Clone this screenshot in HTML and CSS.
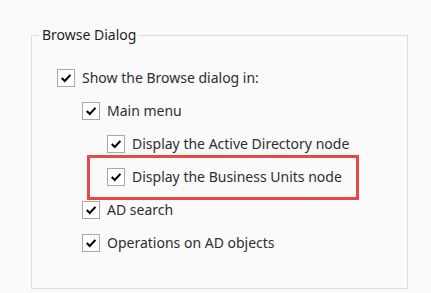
FILE: index.html
```html
<!DOCTYPE html>
<html lang="en">
<head>
    <meta charset="UTF-8">
    <title>Browse Dialog</title>
    <link rel="stylesheet" href="styles.css">
</head>
<body>
    <fieldset class="group">
        <legend>Browse Dialog</legend>

        <div class="options">
            <label class="row level-0">
                <span class="box"><svg viewBox="0 0 17 17"><path d="M4 8.5 L7.2 11.7 L13.2 5.2"/></svg></span>
                Show the Browse dialog in:
            </label>
            <label class="row level-1">
                <span class="box"><svg viewBox="0 0 17 17"><path d="M4 8.5 L7.2 11.7 L13.2 5.2"/></svg></span>
                Main menu
            </label>
            <label class="row level-2">
                <span class="box"><svg viewBox="0 0 17 17"><path d="M4 8.5 L7.2 11.7 L13.2 5.2"/></svg></span>
                Display the Active Directory node
            </label>
            <label class="row level-2 marked">
                <span class="box"><svg viewBox="0 0 17 17"><path d="M4 8.5 L7.2 11.7 L13.2 5.2"/></svg></span>
                Display the Business Units node
            </label>
            <label class="row level-1">
                <span class="box"><svg viewBox="0 0 17 17"><path d="M4 8.5 L7.2 11.7 L13.2 5.2"/></svg></span>
                AD search
            </label>
            <label class="row level-1">
                <span class="box"><svg viewBox="0 0 17 17"><path d="M4 8.5 L7.2 11.7 L13.2 5.2"/></svg></span>
                Operations on AD objects
            </label>
        </div>
    </fieldset>
</body>
</html>
```

FILE: styles.css
```css
body {
    margin: 0;
    padding: 25px 0 0 31px;
    background: #fafafa;
    font-family: "Noto Sans", "Open Sans", sans-serif;
    font-size: 14px;
    color: #2e2e2e;
}
.group {
    box-sizing: border-box;
    width: 377px;
    height: 264px;
    margin: 0;
    padding: 24px 0 0 25px;
    border: 1px solid #dcdcdc;
}
.group legend {
    margin-left: -18px;
    padding: 0 3px;
    line-height: 20px;
    color: #1e1e1e;
}
.options {
    display: flex;
    flex-direction: column;
    gap: 15px;
}
.row {
    display: flex;
    align-items: center;
    gap: 7px;
    height: 18px;
    line-height: 18px;
    white-space: nowrap;
}
.level-1 {
    margin-left: 25px;
}
.level-2 {
    margin-left: 50px;
}
.box {
    box-sizing: border-box;
    width: 18px;
    height: 18px;
    border: 1px solid #a8a8a8;
    background: #fff;
    display: flex;
}
.box svg {
    width: 16px;
    height: 16px;
    fill: none;
    stroke: #000;
    stroke-width: 2.2;
}
.marked {
    align-self: flex-start;
    padding: 10px 14px 11px 17px;
    margin-top: -10px;
    margin-bottom: -11px;
    margin-left: 33px;
    outline: 3px solid #e84848;
}
```
